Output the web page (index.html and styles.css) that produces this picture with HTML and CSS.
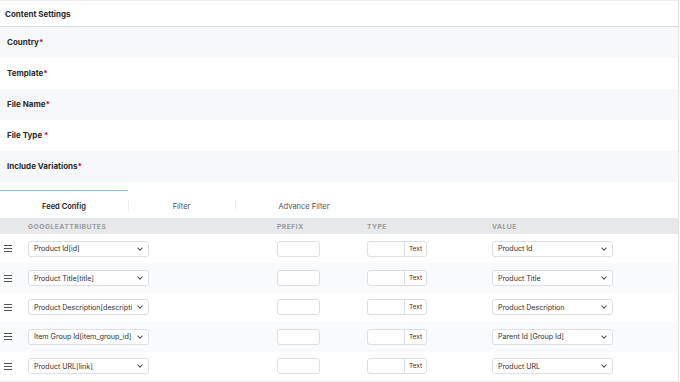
FILE: index.html
```html
<!DOCTYPE html>
<html lang="en">
<head>
  <meta charset="UTF-8">
  <title>Content Settings</title>
  <link rel="stylesheet" href="styles.css">
</head>
<body>
  <div class="panel">
    <div class="panel-head">Content Settings</div>

    <div class="field gray"><span>Country<span class="req">*</span></span></div>
    <div class="field"><span>Template<span class="req">*</span></span></div>
    <div class="field gray"><span>File Name<span class="req">*</span></span></div>
    <div class="field"><span>File Type <span class="req">*</span></span></div>
    <div class="field gray"><span>Include Variations<span class="req">*</span></span></div>

    <div class="tabs">
      <div class="tab active">Feed Config</div>
      <div class="tab">Filter</div>
      <div class="tab">Advance Filter</div>
    </div>

    <div class="grid head">
      <span></span>
      <span>GOOGLEATTRIBUTES</span>
      <span>PREFIX</span>
      <span>TYPE</span>
      <span>VALUE</span>
    </div>

    <div class="grid row">
      <svg class="drag" width="8" height="7" viewBox="0 0 8 7"><path d="M0 .5h8M0 3.5h8M0 6.5h8" stroke="#555" stroke-width="1"/></svg>
      <div class="select"><span>Product Id[id]</span><i class="chev"></i></div>
      <div class="input"></div>
      <div class="type"><div class="type-in"></div><div class="type-add">Text</div></div>
      <div class="select"><span>Product Id</span><i class="chev"></i></div>
    </div>

    <div class="grid row alt">
      <svg class="drag" width="8" height="7" viewBox="0 0 8 7"><path d="M0 .5h8M0 3.5h8M0 6.5h8" stroke="#555" stroke-width="1"/></svg>
      <div class="select"><span>Product Title[title]</span><i class="chev"></i></div>
      <div class="input"></div>
      <div class="type"><div class="type-in"></div><div class="type-add">Text</div></div>
      <div class="select"><span>Product Title</span><i class="chev"></i></div>
    </div>

    <div class="grid row">
      <svg class="drag" width="8" height="7" viewBox="0 0 8 7"><path d="M0 .5h8M0 3.5h8M0 6.5h8" stroke="#555" stroke-width="1"/></svg>
      <div class="select"><span>Product Description[descripti</span><i class="chev"></i></div>
      <div class="input"></div>
      <div class="type"><div class="type-in"></div><div class="type-add">Text</div></div>
      <div class="select"><span>Product Description</span><i class="chev"></i></div>
    </div>

    <div class="grid row alt">
      <svg class="drag" width="8" height="7" viewBox="0 0 8 7"><path d="M0 .5h8M0 3.5h8M0 6.5h8" stroke="#555" stroke-width="1"/></svg>
      <div class="select"><span>Item Group Id[item_group_id]</span><i class="chev"></i></div>
      <div class="input"></div>
      <div class="type"><div class="type-in"></div><div class="type-add">Text</div></div>
      <div class="select"><span>Parent Id [Group Id]</span><i class="chev"></i></div>
    </div>

    <div class="grid row">
      <svg class="drag" width="8" height="7" viewBox="0 0 8 7"><path d="M0 .5h8M0 3.5h8M0 6.5h8" stroke="#555" stroke-width="1"/></svg>
      <div class="select"><span>Product URL[link]</span><i class="chev"></i></div>
      <div class="input"></div>
      <div class="type"><div class="type-in"></div><div class="type-add">Text</div></div>
      <div class="select"><span>Product URL</span><i class="chev"></i></div>
    </div>
  </div>
</body>
</html>
```

FILE: styles.css
```css
body {
  margin: 0;
  background: #fff;
  font-family: Inter, 'Open Sans', Arial, sans-serif;
  color: #222;
}

.panel {
  width: 678px;
  border-right: 1px solid #e2e3e5;
}

.panel-head {
  height: 25px;
  border-top: 1px solid #eceef0;
  border-bottom: 1px solid #dcdde0;
  display: flex;
  align-items: center;
  padding-left: 5px;
  font-size: 8px;
  font-weight: 700;
  color: #2b2b2b;
}

.field {
  height: 31px;
  display: flex;
  align-items: center;
  padding-left: 7px;
  padding-bottom: 1px;
  box-sizing: border-box;
  font-size: 8px;
  font-weight: 700;
  color: #2b2b2b;
}
.gray {
  background: #f7f8fa;
}
.req {
  color: #c8102e;
}

.tabs {
  display: flex;
  margin-top: 8px;
  height: 28px;
  align-items: stretch;
}
.tab {
  display: flex;
  align-items: center;
  justify-content: center;
  padding-top: 3px;
  box-sizing: border-box;
  font-size: 7.5px;
  color: #555;
  border-top: 1px solid transparent;
  position: relative;
}
.tab:nth-child(1) { width: 128px; }
.tab:nth-child(2) { width: 107px; }
.tab:nth-child(3) { width: 138px; }
.tab + .tab::before {
  content: "";
  position: absolute;
  left: 0;
  top: 9px;
  bottom: 7px;
  border-left: 1px solid #eeeff1;
}
.tab.active {
  border-top: 1px solid #8fb8e6;
  color: #222;
  font-weight: 600;
}

.grid {
  display: grid;
  grid-template-columns: 28px 249px 90px 125px 1fr;
  align-items: center;
}

.head {
  height: 16px;
  background: #e7e8ea;
  font-size: 6.8px;
  font-weight: 700;
  letter-spacing: 0.45px;
  color: #9a9b9e;
}

.row {
  height: 29.4px;
}
.row.alt {
  background: #f9fafb;
}
.row:last-child {
  border-bottom: 1px solid #e6e7e9;
}

.drag {
  margin-left: 4px;
}

.select {
  width: 121px;
  height: 16px;
  box-sizing: border-box;
  border: 1px solid #dedfe2;
  border-radius: 3px;
  background: #fff;
  display: flex;
  align-items: center;
  padding: 0 4px 0 5px;
  font-size: 7.2px;
  color: #333;
}
.select span {
  flex: 1;
  min-width: 0;
  overflow: hidden;
  white-space: nowrap;
  letter-spacing: -0.05px;
}
.chev {
  flex: none;
  width: 3px;
  height: 3px;
  border-right: 1px solid #555;
  border-bottom: 1px solid #555;
  transform: rotate(45deg);
  margin: 0 2px 2px 2px;
}

.input {
  width: 43px;
  height: 16px;
  box-sizing: border-box;
  border: 1px solid #dedfe2;
  border-radius: 3px;
  background: #fff;
}

.type {
  display: flex;
  width: 60px;
  height: 16px;
  box-sizing: border-box;
  border: 1px solid #dedfe2;
  border-radius: 3px;
  background: #fff;
}
.type-in {
  width: 36px;
  border-right: 1px solid #dedfe2;
}
.type-add {
  flex: 1;
  display: flex;
  align-items: center;
  justify-content: center;
  font-size: 6.5px;
  color: #333;
}
```
